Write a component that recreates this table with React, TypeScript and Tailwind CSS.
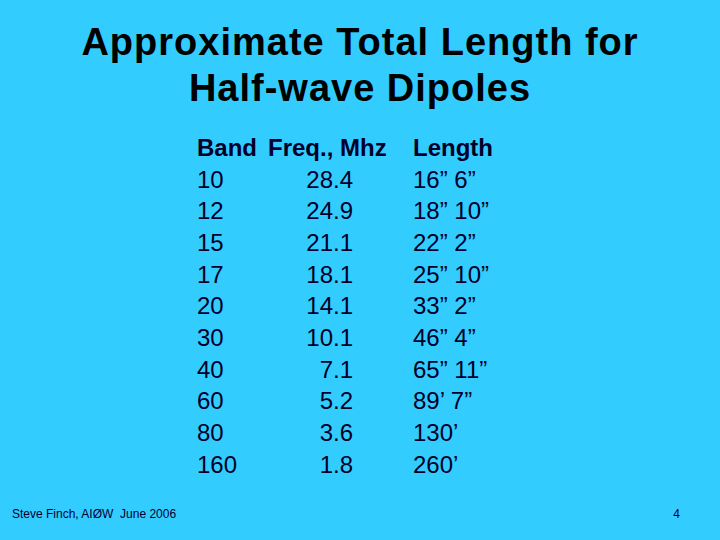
import React from "react";

const rows: [string, string, string][] = [
  ["10", "28.4", "16\u201d 6\u201d"],
  ["12", "24.9", "18\u201d 10\u201d"],
  ["15", "21.1", "22\u201d 2\u201d"],
  ["17", "18.1", "25\u201d 10\u201d"],
  ["20", "14.1", "33\u201d 2\u201d"],
  ["30", "10.1", "46\u201d 4\u201d"],
  ["40", "7.1", "65\u201d 11\u201d"],
  ["60", "5.2", "89\u2019 7\u201d"],
  ["80", "3.6", "130\u2019"],
  ["160", "1.8", "260\u2019"],
];

export default function App() {
  return (
    <div
      className="w-[720px] h-[540px] bg-[#33ccff] flex flex-col overflow-hidden"
      style={{ fontFamily: '"Liberation Sans", Arial, sans-serif' }}
    >
      <h1 className="mt-[19px] text-center text-[38px] leading-[46px] tracking-[1px] font-bold text-[#000000]">
        Approximate Total Length for
        <br />
        Half-wave Dipoles
      </h1>
      <div className="mt-[21px] ml-[197px] text-[24px] leading-[31.67px] text-[#000028]">
        <div className="flex font-bold">
          <div className="w-[71px]">Band</div>
          <div className="w-[145px]">Freq., Mhz</div>
          <div>Length</div>
        </div>
        {rows.map(([b, f, l]) => (
          <div key={b} className="flex">
            <div className="w-[71px]">{b}</div>
            <div className="w-[145px] pr-[60px] text-right">{f}</div>
            <div>{l}</div>
          </div>
        ))}
      </div>
      <div className="mt-auto mb-[19px] flex justify-between px-[12px] text-[12px] leading-[14px] text-[#000033]">
        <span className="whitespace-pre">Steve Finch, AIØW  June 2006</span>
        <span className="mr-[28px]">4</span>
      </div>
    </div>
  );
}
